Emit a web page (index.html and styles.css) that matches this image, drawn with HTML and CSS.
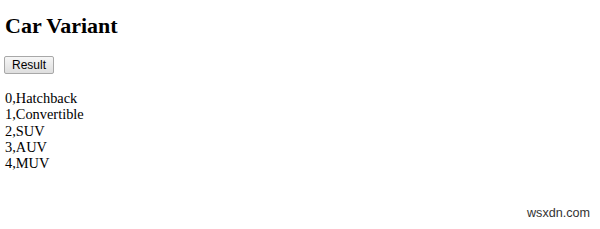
FILE: index.html
```html
<!DOCTYPE html>
<html lang="en">
<head>
    <meta charset="UTF-8">
    <title>Car Variant</title>
    <link rel="stylesheet" href="styles.css">
</head>
<body>

    <h2 class="title">Car Variant</h2>

    <button class="result-btn" type="button">Result</button>

    <div class="variants">
        <div>0,Hatchback</div>
        <div>1,Convertible</div>
        <div>2,SUV</div>
        <div>3,AUV</div>
        <div>4,MUV</div>
    </div>

    <div class="watermark">wsxdn.com</div>

</body>
</html>
```

FILE: styles.css
```css
body {
    font-family: "Liberation Serif", "Times New Roman", serif;
    font-size: 14.4px;
    color: #000;
    background: #fff;
    margin: 0;
    padding: 0 5px;
}
.title {
    font-size: 22px;
    font-weight: bold;
    line-height: 25px;
    margin: 13px 0 18px;
}
.result-btn {
    display: block;
    font-family: "Liberation Sans", Arial, sans-serif;
    font-size: 12px;
    height: 18px;
    padding: 0 7px;
    margin: 0 0 0 -1px;
    color: #000;
    background: linear-gradient(#f6f6f6, #dedede);
    border: 1px solid #a8a8a8;
    border-radius: 2px;
}
.variants {
    margin-top: 16px;
    line-height: 16.3px;
}
.watermark {
    position: absolute;
    right: 10px;
    bottom: 9px;
    font-family: "Liberation Sans", Arial, sans-serif;
    font-size: 12.6px;
    color: #333;
}
```
